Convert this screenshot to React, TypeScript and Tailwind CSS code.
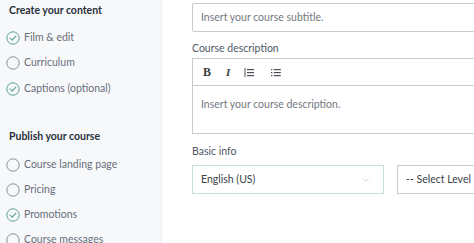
import { ChevronDown } from 'lucide-react';

type Step = { label: string; done: boolean };

const createSteps: Step[] = [
  { label: 'Film & edit', done: true },
  { label: 'Curriculum', done: false },
  { label: 'Captions (optional)', done: true },
];

const publishSteps: Step[] = [
  { label: 'Course landing page', done: false },
  { label: 'Pricing', done: false },
  { label: 'Promotions', done: true },
  { label: 'Course messages', done: false },
];

function StepIcon({ done }: { done: boolean }) {
  return (
    <svg width="14" height="14" viewBox="0 0 14 14" className="shrink-0">
      <circle cx="7" cy="7" r="6.2" fill="none" stroke={done ? '#5aa08f' : '#8a8f96'} strokeWidth="1" />
      {done ? (
        <path d="M4.2 7.2 L6.2 9.1 L9.9 5.2" fill="none" stroke="#5aa08f" strokeWidth="1.1" strokeLinecap="round" strokeLinejoin="round" />
      ) : null}
    </svg>
  );
}

function StepList({ steps, gap }: { steps: Step[]; gap: string }) {
  return (
    <ul className={`flex flex-col ${gap}`}>
      {steps.map((s) => (
        <li key={s.label} className="flex h-[14px] items-center gap-[4px] pl-[6px] text-[10.5px] text-[#686f7a]">
          <StepIcon done={s.done} />
          <span className="whitespace-nowrap">{s.label}</span>
        </li>
      ))}
    </ul>
  );
}

function OrderedIcon() {
  return (
    <svg width="10" height="9" viewBox="0 0 10 9">
      <rect x="0.5" y="0" width="1" height="9" fill="#4a4f57" />
      <rect x="3" y="1" width="7" height="1.2" fill="#4a4f57" />
      <rect x="3" y="4" width="7" height="1.2" fill="#4a4f57" />
      <rect x="3" y="7" width="7" height="1.2" fill="#4a4f57" />
    </svg>
  );
}

function BulletIcon() {
  return (
    <svg width="10" height="9" viewBox="0 0 10 9">
      <rect x="0" y="1" width="1.4" height="1.2" fill="#4a4f57" />
      <rect x="0" y="4" width="1.4" height="1.2" fill="#4a4f57" />
      <rect x="0" y="7" width="1.4" height="1.2" fill="#4a4f57" />
      <rect x="2.8" y="1" width="7" height="1.2" fill="#4a4f57" />
      <rect x="2.8" y="4" width="7" height="1.2" fill="#4a4f57" />
      <rect x="2.8" y="7" width="7" height="1.2" fill="#4a4f57" />
    </svg>
  );
}

export default function App() {
  return (
    <div className="flex h-[243px] w-[474px] overflow-hidden bg-white font-['Lato',sans-serif]">
      <aside className="flex w-[162px] shrink-0 flex-col border-r border-[#eceef1] bg-[#f7f8fa] pt-[3px]">
        <h3 className="pl-[9px] text-[10.5px] font-bold leading-[14px] text-[#29303b]">Create your content</h3>
        <div className="mt-[13.5px]">
          <StepList steps={createSteps} gap="gap-[11.5px]" />
        </div>
        <h3 className="mt-[33.5px] pl-[9px] text-[10.5px] font-bold leading-[14px] text-[#29303b]">Publish your course</h3>
        <div className="mt-[15px]">
          <StepList steps={publishSteps} gap="gap-[11px]" />
        </div>
      </aside>

      <main className="min-w-0 flex-1 pl-[30px] pt-[3px]">
        <div className="flex h-[29px] w-[320px] items-center rounded-[2px] border border-[#c9cbcf] px-[8px] text-[10.5px] text-[#73787f]">
          Insert your course subtitle.
        </div>

        <div className="mt-[8px] text-[10.5px] leading-[16px] text-[#505763]">Course description</div>

        <div className="mt-[2px] w-[320px] border border-[#c9cbcf]">
          <div className="flex h-[27px] items-center border-b border-[#c9cbcf] pl-[10px]">
            <span className="w-[20px] font-['Liberation_Serif',serif] text-[12px] font-bold text-[#3a3f47]">B</span>
            <span className="w-[21px] pl-[3px] font-['Liberation_Serif',serif] text-[11px] italic font-bold text-[#3a3f47]">I</span>
            <span className="flex w-[27px] items-center">
              <OrderedIcon />
            </span>
            <span className="flex items-center">
              <BulletIcon />
            </span>
          </div>
          <div className="h-[47px] px-[8px] pt-[10px] text-[10.5px] leading-[16px] text-[#73787f]">
            Insert your course description.
          </div>
        </div>

        <div className="mt-[9px] text-[10.5px] leading-[16px] text-[#505763]">Basic info</div>

        <div className="mt-[6px] flex gap-[13px]">
          <div className="flex h-[29px] w-[192px] shrink-0 items-center justify-between border border-[#c6dcdc] px-[8px] text-[10.5px] text-[#3a3f47]">
            <span>English (US)</span>
            <ChevronDown size={10} strokeWidth={1.5} className="mr-[4px] text-[#b4b8bd]" />
          </div>
          <div className="flex h-[29px] w-[120px] shrink-0 items-center border border-[#c9cbcf] px-[8px] text-[10.5px] text-[#3a3f47]">
            <span className="whitespace-nowrap">-- Select Level</span>
          </div>
        </div>
      </main>
    </div>
  );
}
